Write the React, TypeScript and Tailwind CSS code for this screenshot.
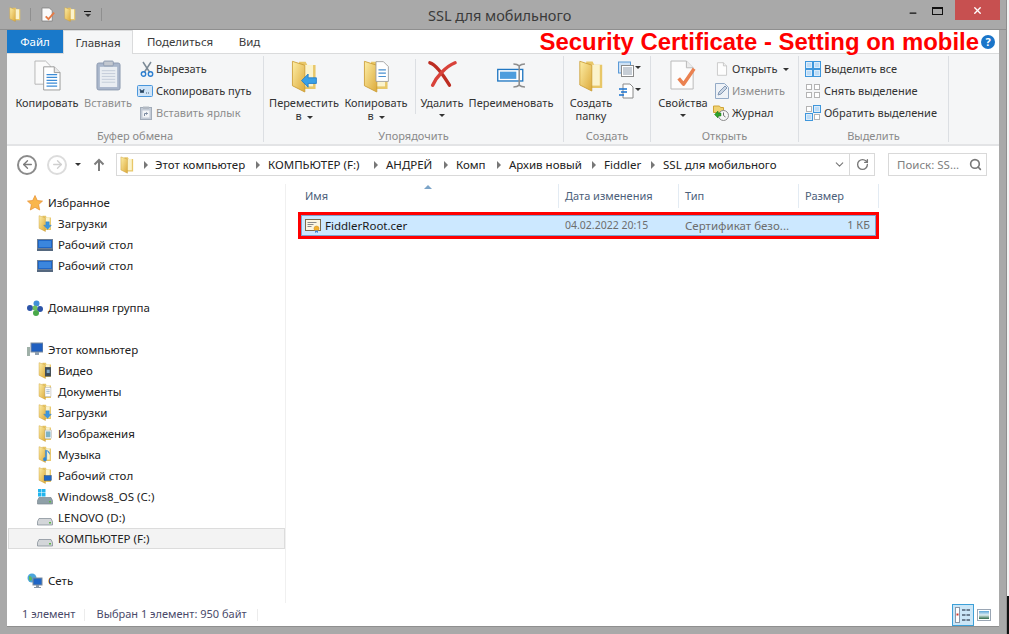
import type { ReactNode } from "react";
import { ArrowLeft, ArrowRight, ChevronDown, Minus, RotateCw, Search, X } from "lucide-react";

type IconProps = { className?: string };

function Folder({ className = "w-4 h-5", children }: { className?: string; children?: ReactNode }) {
  return (
    <svg viewBox="0 0 16 20" className={`${className} shrink-0`}>
      <defs>
        <linearGradient id="fold" x1="0" y1="0" x2="1" y2="1">
          <stop offset="0" stopColor="#fdeea6" />
          <stop offset="1" stopColor="#dca93a" />
        </linearGradient>
      </defs>
      <path d="M5 1h4l1 2h5v14.500H5z" fill="#e8c768" />
      <path d="M7 3h6.500v13H7z" fill="#fbf3cc" />
      <path d="M1 .8 8.500 3.200V19.400L1 15.600z" fill="url(#fold)" stroke="#c99a30" strokeWidth=".5" />
      {children}
    </svg>
  );
}

const Page = ({ className = "w-4 h-5" }: IconProps) => (
  <svg viewBox="0 0 16 20" className={`${className} shrink-0`}>
    <path d="M1.500 1h8.500l4.500 4.500V19h-13z" fill="#fdfdfd" stroke="#b9b9b9" />
    <path d="M10 1v4.500h4.500" fill="#eee" stroke="#b9b9b9" />
  </svg>
);

const CopyDocs = ({ className }: IconProps) => (
  <svg viewBox="0 0 28 32" className={className}>
    <path d="M1 1h11l5 5v19H1z" fill="#fafafa" stroke="#b5b5b5" />
    <path d="M10 7h11l6 6v18H10z" fill="#fff" stroke="#9a9a9a" />
    <path d="M21 7v6h6" fill="#e8e8e8" stroke="#9a9a9a" />
    <path d="M13 15h11M13 18h11M13 21h11M13 24h11M13 27h11" stroke="#3b8bd6" strokeWidth="1.300" />
  </svg>
);

const Clipboard = ({ className }: IconProps) => (
  <svg viewBox="0 0 26 32" className={className}>
    <rect x="1" y="3" width="24" height="28" rx="2" fill="#a9b6cb" stroke="#8d9ab0" />
    <rect x="4" y="7" width="18" height="21" fill="#e9edf2" />
    <path d="M6 11h14M6 14h14M6 17h14M6 20h14M6 23h14" stroke="#c4ccd8" />
    <rect x="8" y="1" width="10" height="5" rx="1" fill="#c3c8d0" stroke="#8d9ab0" />
  </svg>
);

const Scissors = ({ className }: IconProps) => (
  <svg viewBox="0 0 14 16" className={className} fill="none">
    <path d="M3 1l6.500 10M11 1 4.500 11" stroke="#7c8a96" strokeWidth="1.500" />
    <circle cx="3.500" cy="13" r="2.200" stroke="#2d7fd0" strokeWidth="1.400" />
    <circle cx="10.500" cy="13" r="2.200" stroke="#2d7fd0" strokeWidth="1.400" />
  </svg>
);

const PathIcon = ({ className }: IconProps) => (
  <svg viewBox="0 0 16 12" className={className}>
    <rect x=".5" y=".5" width="15" height="11" rx="1" fill="#cfe4f8" stroke="#4a97dc" />
    <path d="M3 4l1 4 1-3 1 3 1-4M9 8h.8M11 8h.8" stroke="#26425e" fill="none" />
  </svg>
);

const Shortcut = ({ className }: IconProps) => (
  <svg viewBox="0 0 12 14" className={className}>
    <rect x=".5" y="1.500" width="11" height="12" fill="#c3cbd6" stroke="#a2acb9" />
    <rect x="3" y=".5" width="6" height="2.500" fill="#b2b9c3" />
    <rect x="2.500" y="4.500" width="7" height="7" fill="#f2f4f6" />
    <path d="M4.500 10V7.500h3M6 6.500l1.500 1-1.500 1" stroke="#7b8aa0" fill="none" />
  </svg>
);

const ArrowBadge = () => (
  <path d="M6.500 12.500l4-4v2.300h5v3.400h-5v2.300z" fill="#39a0e6" stroke="#1f78c6" strokeWidth=".5" />
);

const RedX = ({ className }: IconProps) => (
  <svg viewBox="0 0 30 30" className={className} fill="none">
    <path d="M2 3c7 2 15 14 21 24" stroke="#bd2d22" strokeWidth="3.600" strokeLinecap="round" />
    <path d="M29 3C19 7 9 18 5 27" stroke="#d8423a" strokeWidth="3.600" strokeLinecap="round" />
  </svg>
);

const Rename = ({ className }: IconProps) => (
  <svg viewBox="0 0 30 26" className={className}>
    <rect x=".7" y="6.700" width="26" height="12" fill="#fff" stroke="#2177c2" strokeWidth="1.400" />
    <rect x="3" y="9" width="17" height="7.500" fill="#4d9ddd" />
    <path d="M17 1c3 0 5 1 6 2 1-1 3-2 6-2M23 3v20M17 25c3 0 5-1 6-2 1 1 3 2 6 2" stroke="#8d8d8d" strokeWidth="1.600" fill="none" />
  </svg>
);

const NewItem = ({ className }: IconProps) => (
  <svg viewBox="0 0 16 16" className={className}>
    <rect x=".5" y="1" width="12" height="11" fill="#cfe2f5" stroke="#5a9ad8" />
    <rect x="3.500" y="4.500" width="12" height="11" fill="#fff" stroke="#8a8a8a" />
    <path d="M5 7h9M5 9h9M5 11h9M5 13h9" stroke="#8d9bab" />
  </svg>
);

const EasyAccess = ({ className }: IconProps) => (
  <svg viewBox="0 0 16 16" className={className}>
    <path d="M5 1h7l3 3v11H5z" fill="#fff" stroke="#8a8a8a" />
    <path d="M1 6h8M3 9h6M1 12h5" stroke="#1a73d0" strokeWidth="1.400" />
  </svg>
);

const Properties = ({ className }: IconProps) => (
  <svg viewBox="0 0 28 32" className={className} fill="none">
    <path d="M1 1h16l7 7v22H1z" fill="#fcfcfc" stroke="#b8b8b8" />
    <path d="M17 1v7h7" fill="#ececec" stroke="#b8b8b8" />
    <path d="M9 19l5 6 11-16" stroke="#ea8150" strokeWidth="3.600" strokeLinejoin="round" />
  </svg>
);

const Edit = ({ className }: IconProps) => (
  <svg viewBox="0 0 14 16" className={className} fill="none">
    <path d="M.5.5h9l4 4v11H.5z" fill="#eef2f7" stroke="#93aac6" />
    <path d="M3 12l1-3 6-6 2 2-6 6z" fill="#c9d5e4" stroke="#8297b2" />
  </svg>
);

const History = ({ className }: IconProps) => (
  <svg viewBox="0 0 16 16" className={className} fill="none">
    <path d="M.5 1h6l1 1.500h3v5H.5z" fill="#f0d271" stroke="#cfa437" />
    <circle cx="10.500" cy="10.500" r="5" fill="#f6f6f6" stroke="#8b8b8b" />
    <path d="M10.500 7.500v3l2 1.500" stroke="#6f6f6f" />
    <path d="M1.500 9.500l3.500-3.500v2h3v3H5v2z" fill="#2fa32a" stroke="#1c7a1a" strokeWidth=".5" />
  </svg>
);

const SelectGrid = ({ mode }: { mode: "all" | "none" | "invert" }) => {
  const on: Record<string, boolean[]> = {
    all: [true, true, true, true],
    none: [false, false, false, false],
    invert: [false, true, true, false],
  };
  const cells: [number, number][] = [[1, 1], [9, 1], [1, 9], [9, 9]];
  return (
    <svg viewBox="0 0 16 16" className="w-4 h-4 shrink-0">
      {mode === "all" && <rect width="16" height="16" fill="#3f97dc" />}
      {mode === "invert" && (
        <>
          <rect x="8" width="8" height="8" fill="#3f97dc" />
          <rect y="8" width="8" height="8" fill="#3f97dc" />
        </>
      )}
      {cells.map(([x, y], i) => (
        <rect
          key={i}
          x={x + 0.5}
          y={y + 0.5}
          width="5"
          height="5"
          fill={on[mode][i] ? "#bcdcf7" : "#fff"}
          stroke={mode === "all" || on[mode][i] ? "#dcecfa" : "#b4b4b4"}
        />
      ))}
    </svg>
  );
};

const Caret = ({ className = "" }: IconProps) => (
  <span className={`inline-block w-0 h-0 border-x-[3.500px] border-x-transparent border-t-[3.500px] border-t-[#333] ${className}`} />
);

const Chevron = () => (
  <span className="inline-block w-0 h-0 border-y-[4px] border-y-transparent border-l-[4px] border-l-[#777] shrink-0" />
);

function LargeButton({ w, icon, lines, caret, muted, ml }: { w: string; icon: ReactNode; lines: ReactNode[]; caret?: boolean; muted?: boolean; ml?: string }) {
  return (
    <div className={`${w} ${ml ?? ""} flex flex-col items-center shrink-0 ${muted ? "text-[#8d8d8d]" : "text-[#333]"}`}>
      <div className="h-[37px] pt-[1px] flex items-start justify-center">{icon}</div>
      {lines.map((l, i) => (
        <div key={i} className="h-[13px] leading-[13px] whitespace-nowrap">
          {l}
        </div>
      ))}
      {caret && <Caret className="mt-[5px]" />}
    </div>
  );
}

function SmallRow({ icon, label, muted, caret, w = "w-[19px]" }: { icon: ReactNode; label: string; muted?: boolean; caret?: boolean; w?: string }) {
  return (
    <div className={`h-[22px] flex items-center whitespace-nowrap ${muted ? "text-[#8d8d8d]" : "text-[#333]"}`}>
      <div className={`${w} flex items-center shrink-0`}>{icon}</div>
      {label}
      {caret && <Caret className="ml-[6px]" />}
    </div>
  );
}

function Group({ w, title, children, last }: { w: string; title: string; children: ReactNode; last?: boolean }) {
  return (
    <div className={`${w} shrink-0 h-[86px] mt-[2px] flex flex-col ${last ? "" : "border-r"} border-[#dcdfe3]`}>
      <div className="flex-1 flex pt-[3px] min-h-0">{children}</div>
      <div className="h-[13px] text-center text-[#8a8a8a] leading-[13px]">{title}</div>
    </div>
  );
}

function Ribbon() {
  return (
    <div className="h-[92px] bg-[#f5f6f7] border-b-2 border-[#e3e4e6] flex text-[11px]">
      <Group w="w-[257px]" title="Буфер обмена">
        <LargeButton ml="ml-[8px]" w="w-[64px]" icon={<CopyDocs className="w-[27px] h-[31px]" />} lines={["Копировать"]} />
        <LargeButton w="w-[58px]" muted icon={<Clipboard className="w-[25px] h-[31px]" />} lines={["Вставить"]} />
        <div className="flex flex-col -mt-[1px]">
          <SmallRow icon={<Scissors className="w-[14px] h-[16px] ml-[3px]" />} label="Вырезать" />
          <SmallRow icon={<PathIcon className="w-[16px] h-[12px]" />} label="Скопировать путь" />
          <SmallRow muted icon={<Shortcut className="w-[12px] h-[14px] ml-[3px]" />} label="Вставить ярлык" />
        </div>
      </Group>
      <Group w="w-[300px]" title="Упорядочить">
        <LargeButton ml="ml-[4px]" w="w-[72px]" icon={<Folder className="w-[28px] h-[33px]"><ArrowBadge /></Folder>} lines={["Переместить", <>в <Caret className="ml-[2px] mb-[1px]" /></>]} />
        <LargeButton w="w-[72px]" icon={<Folder className="w-[28px] h-[33px]"><path d="M8 1h4.500l3 3v9H8z" fill="#fff" stroke="#999" strokeWidth=".5" /><path d="M9.500 6h4.500M9.500 8h4.500M9.500 10h4.500" stroke="#4a90d0" strokeWidth=".7" /></Folder>} lines={["Копировать", <>в <Caret className="ml-[2px] mb-[1px]" /></>]} />
        <div className="w-[1px] h-[55px] bg-[#dcdfe3] ml-[3px] mr-[1px]" />
        <LargeButton w="w-[50px]" icon={<RedX className="w-[30px] h-[28px]" />} lines={["Удалить"]} caret />
        <LargeButton w="w-[88px]" icon={<Rename className="w-[29px] h-[25px] mt-[3px]" />} lines={["Переименовать"]} />
      </Group>
      <Group w="w-[87px]" title="Создать">
        <LargeButton ml="ml-[3px]" w="w-[48px]" icon={<Folder className="w-[26px] h-[32px]" />} lines={["Создать", "папку"]} />
        <div className="flex flex-col ml-[3px] -mt-[1px]">
          <div className="h-[22px] flex items-center"><NewItem className="w-4 h-4" /><Caret className="ml-[1px] -mt-[4px]" /></div>
          <div className="h-[22px] flex items-center"><EasyAccess className="w-4 h-4" /><Caret className="ml-[1px] -mt-[4px]" /></div>
        </div>
      </Group>
      <Group w="w-[148px]" title="Открыть">
        <LargeButton ml="ml-[4px]" w="w-[56px]" icon={<Properties className="w-[27px] h-[31px]" />} lines={["Свойства"]} caret />
        <div className="flex flex-col ml-[2px] -mt-[1px]">
          <SmallRow icon={<Page className="w-[12px] h-[14px] ml-[3px]" />} label="Открыть" caret />
          <SmallRow muted icon={<Edit className="w-[14px] h-[16px] ml-[2px]" />} label="Изменить" />
          <SmallRow icon={<History className="w-[16px] h-[16px]" />} label="Журнал" />
        </div>
      </Group>
      <Group w="w-[150px]" title="Выделить">
        <div className="flex flex-col ml-[6px] -mt-[1px]">
          <SmallRow icon={<SelectGrid mode="all" />} label="Выделить все" />
          <SmallRow icon={<SelectGrid mode="none" />} label="Снять выделение" />
          <SmallRow icon={<SelectGrid mode="invert" />} label="Обратить выделение" />
        </div>
      </Group>
    </div>
  );
}

function TitleBar() {
  return (
    <div className="h-[29px] border-b border-[#8f8f8f] box-content flex relative">
      <div className="flex items-center pl-[8px] pb-[1px]">
        <Folder className="w-[14px] h-[15px]" />
        <div className="w-[1px] h-[13px] bg-[#8f8f8f] ml-[8px]" />
        <svg viewBox="0 0 16 16" className="w-[15px] h-[15px] ml-[10px]" fill="none">
          <path d="M1 1h8l3 3v11H1z" fill="#fafafa" stroke="#888" />
          <path d="M5 10l3 3 6-7" stroke="#e57a45" strokeWidth="2" />
        </svg>
        <Folder className="w-[14px] h-[15px] ml-[7px]" />
        <div className="ml-[7px] flex flex-col items-center gap-[2px]">
          <div className="w-[7px] h-[1px] bg-[#111]" />
          <Caret className="border-t-[#111]" />
        </div>
        <div className="w-[1px] h-[13px] bg-[#8f8f8f] ml-[10px]" />
      </div>
      <div className="absolute left-[428px] top-[6px] text-[14.500px] leading-[18px] text-[#3a3a3a]">SSL для мобильного</div>
      <div className="ml-auto flex items-start pr-[6px]">
        <Minus className="w-[10px] h-[12px] mt-[7px] mr-[14px] text-[#111]" strokeWidth={3} />
        <div className="w-[11px] h-[8px] border border-t-2 border-[#111] mt-[7px] mr-[12px]" />
        <div className="w-[45px] h-[20px] bg-[#c75050] flex items-center justify-center">
          <X className="w-[11px] h-[11px] text-white" strokeWidth={3} />
        </div>
      </div>
    </div>
  );
}

function Tabs() {
  return (
    <div className="h-[24px] bg-white flex relative border-b border-[#dadbdc]">
      <div className="w-[56px] h-[23px] bg-[#1979ca] text-white flex items-center justify-center">Файл</div>
      <div className="w-[70px] h-[24px] bg-[#f5f6f7] border-x border-t border-[#dadbdc] flex items-center justify-center text-[#3b3b3b]">Главная</div>
      <div className="w-[94px] flex items-center justify-center text-[#3b3b3b]">Поделиться</div>
      <div className="w-[45px] flex items-center justify-center text-[#3b3b3b]">Вид</div>
      <div className="ml-auto flex items-center pr-[4px]">
        <span className="[font-family:'Liberation_Sans',Arial,sans-serif] font-bold text-[23.900px] leading-[24px] text-[#ff0000] whitespace-nowrap">
          Security Certificate - Setting on mobile
        </span>
        <span className="w-[14px] h-[14px] ml-[2px] rounded-full bg-[#1a75c9] text-white text-[11px] font-bold flex items-center justify-center leading-none">?</span>
      </div>
    </div>
  );
}

const CRUMBS = [
  { label: "Этот компьютер", w: "w-[113px]" },
  { label: "КОМПЬЮТЕР (F:)", w: "w-[118px]" },
  { label: "АНДРЕЙ", w: "w-[70px]" },
  { label: "Комп", w: "w-[53px]" },
  { label: "Архив новый", w: "w-[95px]" },
  { label: "Fiddler", w: "w-[59px]" },
  { label: "SSL для мобильного", w: "w-[120px]" },
];

function NavBar() {
  return (
    <div className="h-[38px] bg-white flex items-center pl-[10px] pr-[12px] pb-[1px]">
      <div className="w-[20px] h-[20px] rounded-full border-2 border-[#8b8b8b] flex items-center justify-center">
        <ArrowLeft className="w-[13px] h-[13px] text-[#7b7b7b]" strokeWidth={2.5} />
      </div>
      <div className="w-[20px] h-[20px] rounded-full border-2 border-[#dcdcdc] flex items-center justify-center ml-[10px]">
        <ArrowRight className="w-[13px] h-[13px] text-[#cfcfcf]" strokeWidth={2.5} />
      </div>
      <Caret className="ml-[8px] border-t-[#8b8b8b]" />
      <svg viewBox="0 0 12 14" className="w-[12px] h-[14px] ml-[12px] shrink-0" fill="none">
        <path d="M6 13V2M1.500 6.500 6 2l4.500 4.500" stroke="#7d7d7d" strokeWidth="2" />
      </svg>
      <div className="ml-[11px] w-[759px] h-[23px] border border-[#d9d9d9] flex items-center text-[#222] shrink-0">
        <Folder className="w-[14px] h-[18px] ml-[3px]" />
        <div className="ml-[10px] flex items-center"><Chevron /></div>
        <div className="flex items-center ml-[7px] whitespace-nowrap">
          {CRUMBS.map((c, i) => (
            <div key={c.label} className={`${c.w} flex items-center justify-between shrink-0`}>
              {c.label}
              {i < CRUMBS.length - 1 && <span className="mr-[8px] flex items-center"><Chevron /></span>}
            </div>
          ))}
        </div>
        <ChevronDown className="w-[13px] h-[13px] text-[#777] ml-auto mr-[3px]" />
        <div className="w-[1px] h-full bg-[#d9d9d9]" />
        <div className="w-[24px] flex justify-center">
          <RotateCw className="w-[13px] h-[13px] text-[#777]" strokeWidth={2.5} />
        </div>
      </div>
      <div className="ml-[13px] w-[99px] h-[23px] border border-[#d9d9d9] flex items-center pl-[8px] text-[#808080]">
        Поиск: SS...
        <Search className="w-[13px] h-[13px] text-[#777] ml-auto mr-[4px]" strokeWidth={3} />
      </div>
    </div>
  );
}

const LaptopIcon = () => (
  <svg viewBox="0 0 16 12" className="w-[16px] h-[12px] shrink-0">
    <rect x=".5" y=".5" width="15" height="9" fill="#1f66c6" stroke="#6d7f96" />
    <rect x="2" y="2" width="12" height="6" fill="#3b86dd" />
    <rect y="10" width="16" height="2" fill="#55687f" />
  </svg>
);

const DownBadge = () => <path d="M9 8h4v4h2.500l-4.500 5-4.500-5H9z" fill="#3b96e0" stroke="#2176c4" strokeWidth=".4" />;

const Drive = ({ win }: { win?: boolean }) => (
  <svg viewBox="0 0 16 16" className="w-[16px] h-[16px] shrink-0">
    {win && (
      <g fill="#22b5ee">
        <rect x="1" width="3.500" height="3.500" /><rect x="5" width="3.500" height="3.500" /><rect x="1" y="4" width="3.500" height="3.500" /><rect x="5" y="4" width="3.500" height="3.500" />
      </g>
    )}
    <path d="M2 8.500h12l1.500 3v3.500H.5V11.500z" fill={win ? "#8fa0a8" : "#d3d6d9"} stroke="#7d8790" strokeWidth=".7" />
    <rect x="12" y="12" width="2" height="1.500" fill="#5fb84a" />
  </svg>
);

type Row = { label?: string; icon?: ReactNode; level?: 1 | 2; selected?: boolean };

const TREE: Row[] = [
  {
    label: "Избранное",
    level: 1,
    icon: (
      <svg viewBox="0 0 16 16" className="w-[16px] h-[16px] shrink-0">
        <path d="M8 .5l2.300 5 5.200.6-3.900 3.500 1.100 5.400L8 12.300l-4.700 2.700 1.100-5.400L.5 6.100l5.200-.6z" fill="#f9b64c" stroke="#e58c2c" strokeWidth=".7" />
      </svg>
    ),
  },
  { label: "Загрузки", level: 2, icon: <Folder className="w-[16px] h-[17px]"><DownBadge /></Folder> },
  { label: "Рабочий стол", level: 2, icon: <LaptopIcon /> },
  { label: "Рабочий стол", level: 2, icon: <LaptopIcon /> },
  {},
  {
    label: "Домашняя группа",
    level: 1,
    icon: (
      <svg viewBox="0 0 16 16" className="w-[16px] h-[16px] shrink-0">
        <circle cx="9.500" cy="3.500" r="3" fill="#3f8fd8" />
        <circle cx="3" cy="8" r="3" fill="#2c54a8" />
        <circle cx="13" cy="9" r="3" fill="#2c54a8" />
        <circle cx="9" cy="13" r="3" fill="#49a94a" />
        <circle cx="8" cy="8" r="2.500" fill="#6ec05e" />
      </svg>
    ),
  },
  {},
  {
    label: "Этот компьютер",
    level: 1,
    icon: (
      <svg viewBox="0 0 16 16" className="w-[16px] h-[16px] shrink-0">
        <rect x="4" y="1" width="12" height="9" fill="#1f5fc0" stroke="#7c8b9c" />
        <rect x="0" y="5" width="3" height="9" fill="#9fb0a8" />
        <rect x="8" y="10" width="4" height="3" fill="#90a0b0" />
      </svg>
    ),
  },
  { label: "Видео", level: 2, icon: <Folder className="w-[16px] h-[17px]"><rect x="8" y="6" width="7" height="11" fill="#3d4a57" /><rect x="10" y="9" width="3.500" height="4" fill="#7ea8c8" /></Folder> },
  { label: "Документы", level: 2, icon: <Folder className="w-[16px] h-[17px]"><rect x="8" y="5" width="7" height="11" fill="#fff" stroke="#9a9a9a" strokeWidth=".5" /><path d="M9.500 8h4M9.500 10h4M9.500 12h4" stroke="#6b93ba" strokeWidth=".7" /></Folder> },
  { label: "Загрузки", level: 2, icon: <Folder className="w-[16px] h-[17px]"><DownBadge /></Folder> },
  { label: "Изображения", level: 2, icon: <Folder className="w-[16px] h-[17px]"><rect x="8" y="6" width="7.500" height="10" fill="#fff" stroke="#9a9a9a" strokeWidth=".5" /><rect x="9" y="7.500" width="5.500" height="7" fill="#7fb2c4" /></Folder> },
  { label: "Музыка", level: 2, icon: <Folder className="w-[16px] h-[17px]"><path d="M10 5v10.500a2 2 0 1 1-1.500-1.900V5zM10 5c2 1 4 2 3.500 5" fill="#2f86d6" stroke="#2f86d6" strokeWidth=".5" /></Folder> },
  { label: "Рабочий стол", level: 2, icon: <Folder className="w-[16px] h-[17px]"><rect x="7" y="10" width="8.500" height="6" fill="#1f66c6" stroke="#34495e" strokeWidth=".5" /></Folder> },
  { label: "Windows8_OS (C:)", level: 2, icon: <Drive win /> },
  { label: "LENOVO (D:)", level: 2, icon: <Drive /> },
  { label: "КОМПЬЮТЕР (F:)", level: 2, icon: <Drive />, selected: true },
  {},
  {
    label: "Сеть",
    level: 1,
    icon: (
      <svg viewBox="0 0 16 16" className="w-[16px] h-[16px] shrink-0">
        <circle cx="5" cy="5" r="4.500" fill="#4aa5dc" />
        <path d="M2 3c2 0 3 1 3 3s-2 2-3 1z" fill="#5cb85c" />
        <rect x="6" y="5" width="9" height="7" fill="#1f66c6" stroke="#7c8b9c" />
        <rect x="9" y="12" width="3" height="2" fill="#8a97a5" />
        <rect x="7" y="14" width="7" height="1" fill="#8a97a5" />
      </svg>
    ),
  },
];

function Sidebar() {
  return (
    <div className="w-[279px] shrink-0 border-r border-[#f0f0f0] pt-[8px] pl-[1px] text-[#222]">
      {TREE.map((r, i) =>
        r.label ? (
          <div
            key={i}
            className={`h-[21px] flex items-center border ${r.selected ? "bg-[#f3f3f3] border-[#dcdcdc]" : "border-transparent"} ${r.level === 1 ? "pl-[18px]" : "pl-[28px]"}`}
          >
            <div className="w-[21px] shrink-0 flex items-center">{r.icon}</div>
            <span className="whitespace-nowrap">{r.label}</span>
          </div>
        ) : (
          <div key={i} className="h-[21px]" />
        ),
      )}
    </div>
  );
}

const COLUMNS = [
  { w: "w-[273px]", label: "Имя", pl: "pl-[19px]" },
  { w: "w-[120px]", label: "Дата изменения", pl: "pl-[6px]" },
  { w: "w-[120px]", label: "Тип", pl: "pl-[6px]" },
  { w: "w-[80px]", label: "Размер", pl: "pl-[6px]" },
];

function FileList() {
  return (
    <div className="flex-1 min-w-0 relative">
      <div className="flex h-[24px] text-[11px]">
        {COLUMNS.map((c) => (
          <div key={c.label} className={`${c.w} ${c.pl} shrink-0 border-r border-[#e3ebf3] flex items-center text-[#4c607a]`}>
            {c.label}
          </div>
        ))}
      </div>
      <span className="absolute left-[138px] top-[1px] w-0 h-0 border-x-[4px] border-x-transparent border-b-[4px] border-b-[#7ba4c8]" />
      <div className="mt-[4px] ml-[12px] w-[581px] h-[27px] border-[3px] border-[#ff0000]">
        <div className="h-full bg-[#cce8ff] border border-[#7da2ce] flex items-center">
          <div className="w-[263px] pl-[3px] flex items-center text-[#1a1a1a] shrink-0">
            <svg viewBox="0 0 16 14" className="w-[16px] h-[14px] mr-[4px] shrink-0">
              <rect x=".5" y=".5" width="15" height="11" fill="#fbf5e2" stroke="#7a6a4a" />
              <path d="M2.500 3.500h9M2.500 5.500h6M2.500 7.500h4" stroke="#8a8a8a" />
              <circle cx="11.500" cy="9.500" r="2.500" fill="#f2b02f" stroke="#c98a18" strokeWidth=".5" />
              <path d="M10 11.500v2.500l1.500-1 1.500 1v-2.500" fill="#3f86d6" />
            </svg>
            FiddlerRoot.cer
          </div>
          <div className="w-[120px] shrink-0 text-[#6d6d6d] text-[10.500px]">04.02.2022 20:15</div>
          <div className="w-[120px] shrink-0 text-[#6d6d6d] whitespace-nowrap">Сертификат безо...</div>
          <div className="flex-1 text-right pr-[5px] text-[#6d6d6d] text-[11px]">1 КБ</div>
        </div>
      </div>
    </div>
  );
}

function StatusBar() {
  return (
    <div className="h-[23px] flex items-center text-[#4a4a6a] text-[11px]">
      <span className="ml-[15px] whitespace-nowrap">1 элемент</span>
      <div className="w-[1px] h-[12px] bg-[#ececec] ml-[9px]" />
      <span className="ml-[11px] whitespace-nowrap">Выбран 1 элемент: 950 байт</span>
      <div className="w-[1px] h-[12px] bg-[#ececec] ml-[10px]" />
      <div className="ml-auto mr-[3px] w-[22px] h-[22px] bg-[#cbe6f7] border border-[#3ca0d8] flex items-center justify-center">
        <svg viewBox="0 0 16 16" className="w-[16px] h-[16px]">
          <rect x=".5" y=".5" width="4" height="15" fill="#fff" stroke="#8b97a8" />
          <path d="M7 3h8M7 8h8M7 13h8" stroke="#4e5d70" strokeWidth="1.300" strokeDasharray="3.500 1" />
          <rect x="1.500" y="6.500" width="2" height="2" fill="#d4382c" />
        </svg>
      </div>
      <div className="mr-[8px] w-[14px] h-[12px] border border-[#9aa6b4] bg-white p-[1px]">
        <div className="w-full h-full bg-gradient-to-b from-[#5aa6d8] via-[#dfeef2] to-[#2f6b4a]" />
      </div>
    </div>
  );
}

export default function App() {
  return (
    <div className="w-[1009px] h-[634px] bg-[#a9a9a9] overflow-hidden text-[11.500px] [font-family:'Noto_Sans',sans-serif] flex">
      <div className="w-[1006px] h-full flex flex-col border-r border-[#8f8f8f] box-content">
        <TitleBar />
        <div className="ml-[7px] mr-[7px] h-[596px] bg-white flex flex-col border-b border-[#8f8f8f] box-content">
          <Tabs />
          <Ribbon />
          <NavBar />
          <div className="flex-1 min-h-0 flex">
            <Sidebar />
            <FileList />
          </div>
          <StatusBar />
        </div>
      </div>
      <div className="flex-1 flex flex-col">
        <div className="flex-1 bg-[#f4f4f4]" />
        <div className="h-[38px] bg-[#111]" />
      </div>
    </div>
  );
}
